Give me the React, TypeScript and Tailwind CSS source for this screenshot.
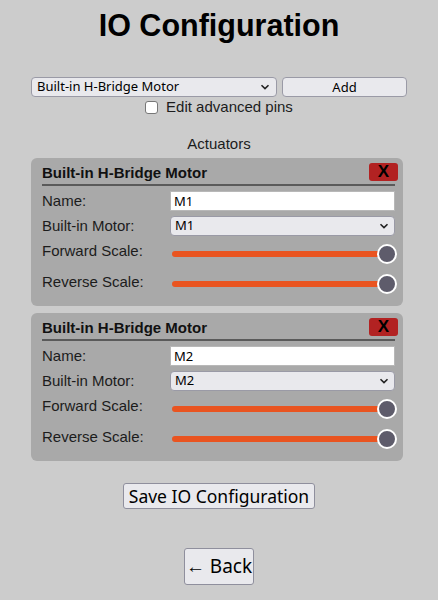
import { useState } from 'react';

type Motor = { name: string; motor: string };

function Chevron() {
  return (
    <svg width="10" height="6" viewBox="0 0 10 6" className="shrink-0">
      <path d="M1.5 1.2 L5 4.6 L8.5 1.2" fill="none" stroke="#222" strokeWidth="1.6" />
    </svg>
  );
}

function Slider() {
  return (
    <div className="flex w-full items-center mt-[5px] h-[20px]">
      <div className="h-[6px] flex-1 rounded-full bg-[#e95420] ml-[2px]" />
      <div className="-ml-[3px] -mr-[2px] h-[20px] w-[20px] rounded-full border-2 border-white bg-[#5e5c6b] shrink-0" />
    </div>
  );
}

function MotorCard({ motor }: { motor: Motor }) {
  return (
    <div className="w-[372px] rounded-[6px] bg-[#a9a9a9] pl-[11px] pr-[8px] pt-[5px] pb-[9px]">
      <div className="flex items-center justify-between h-[18px]">
        <span className="text-[15px] font-bold text-[#111] leading-[18px] mt-[1px]">Built-in H-Bridge Motor</span>
        <button className="h-[18px] w-[29px] -mr-[3px] rounded-[3px] bg-[#b22222] text-[17px] font-bold leading-[18px] text-black">
          X
        </button>
      </div>
      <div className="mt-[3px] h-[2px] bg-[#5a5a5a]" />
      <div className="mt-[5px] flex h-[20px] items-center">
        <label className="w-[128px] text-[15px] leading-[18px] text-[#1c1c1c]">Name:</label>
        <input
          defaultValue={motor.name}
          className="h-[20px] flex-1 border border-[#b8b8b8] bg-white px-[3px] text-[13px] text-black outline-none"
          style={{ fontFamily: '"Noto Sans", sans-serif' }}
        />
      </div>
      <div className="mt-[5px] flex h-[20px] items-center">
        <label className="w-[128px] text-[15px] leading-[18px] text-[#1c1c1c]">Built-in Motor:</label>
        <div className="flex h-[20px] flex-1 items-center justify-between rounded-[4px] border border-[#9a9aa6] bg-[#e9e9ed] pl-[4px] pr-[5px] text-[13px] text-black">
          <span style={{ fontFamily: '"Noto Sans", sans-serif' }}>{motor.motor}</span>
          <Chevron />
        </div>
      </div>
      <div className="flex h-[30px] items-center">
        <label className="w-[128px] text-[15px] leading-[18px] text-[#1c1c1c]">Forward Scale:</label>
        <div className="flex-1">
          <Slider />
        </div>
      </div>
      <div className="flex h-[31px] items-center">
        <label className="w-[128px] text-[15px] leading-[18px] text-[#1c1c1c]">Reverse Scale:</label>
        <div className="flex-1">
          <Slider />
        </div>
      </div>
    </div>
  );
}

export default function App() {
  const [motors] = useState<Motor[]>([
    { name: 'M1', motor: 'M1' },
    { name: 'M2', motor: 'M2' },
  ]);
  const [advanced, setAdvanced] = useState(false);

  return (
    <div
      className="min-h-screen bg-[#cccccc] text-[#1c1c1c]"
      style={{ fontFamily: '"Liberation Sans", Arial, sans-serif' }}
    >
      <div className="mx-auto w-[376px] pt-[7px]">
        <h1 className="text-center text-[30.5px] font-bold leading-[36px] text-black">IO Configuration</h1>

        <div className="mt-[34px] flex h-[20px] gap-[5px]">
          <div
            className="flex w-[246px] items-center justify-between rounded-[4px] border border-[#9a9aa6] bg-[#e9e9ed] pl-[5px] pr-[6px] text-[13px] text-black"
            style={{ fontFamily: '"Noto Sans", sans-serif' }}
          >
            <span>Built-in H-Bridge Motor</span>
            <Chevron />
          </div>
          <button
            className="flex-1 rounded-[4px] border border-[#9a9aa6] bg-[#e9e9ed] text-[13px] text-black"
            style={{ fontFamily: '"Noto Sans", sans-serif' }}
          >
            Add
          </button>
        </div>

        <label className="mt-[1px] flex h-[18px] items-center justify-center gap-[8px] text-[15px] leading-[18px]">
          <input
            type="checkbox"
            checked={advanced}
            onChange={(e) => setAdvanced(e.target.checked)}
            className="h-[13px] w-[13px] appearance-none rounded-[3px] border border-[#777] bg-white"
          />
          <span>Edit advanced pins</span>
        </label>

        <p className="mt-[19px] text-center text-[15px] leading-[18px]">Actuators</p>

        <div className="mt-[5px] flex flex-col gap-[7px]">
          {motors.map((m) => (
            <MotorCard key={m.name} motor={m} />
          ))}
        </div>

        <div className="mt-[22px] flex justify-center">
          <button
            className="h-[26px] rounded-[3px] border border-[#8f8f9d] bg-[#e9e9ed] px-[5px] text-[17.5px] leading-[24px] text-black"
            style={{ fontFamily: '"Noto Sans", sans-serif' }}
          >
            Save IO Configuration
          </button>
        </div>

        <div className="mt-[39px] flex justify-center">
          <button
            className="h-[37px] w-[70px] rounded-[3px] border border-[#8f8f9d] bg-[#e9e9ed] text-[19px] leading-[35px] text-black"
            style={{ fontFamily: '"Noto Sans", sans-serif' }}
          >
            ← Back
          </button>
        </div>
      </div>
    </div>
  );
}
